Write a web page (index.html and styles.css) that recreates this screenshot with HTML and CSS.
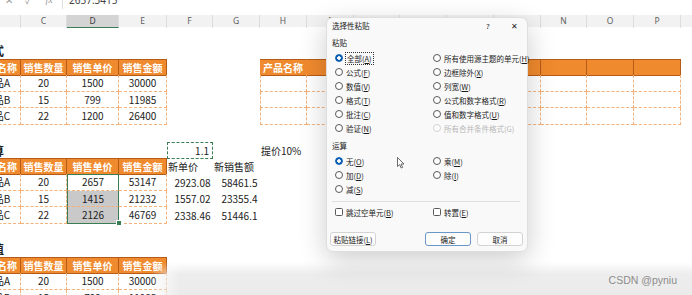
FILE: index.html
```html
<!DOCTYPE html>
<html>

<head>
  <meta charset="utf-8">
  <title>选择性粘贴</title>
  <link rel="stylesheet" href="styles.css">
</head>

<body>
  <div class="formula-bar">
    <span class="fb-icon x">✕</span>
    <span class="fb-icon ok">✓</span>
    <span class="fb-icon fx">fx</span>
    <span class="fb-sep"></span>
    <span class="fb-value">2657.3415</span>
  </div>

  <div class="col-heads">
    <div>B</div><div>C</div><div class="active">D</div><div>E</div><div>F</div><div>G</div><div>H</div><div>I</div>
    <div>J</div><div>K</div><div>L</div><div>M</div><div>N</div><div>O</div><div>P</div><div>Q</div>
  </div>

  <div class="sheet">
    <div class="row first"></div>
    <div class="row"><div class="title">式</div></div>
    <div class="row">
      <div class="th">产品名称</div><div class="th">销售数量</div><div class="th">销售单价</div><div class="th">销售金额</div>
      <div></div><div></div>
      <div class="th open">产品名称</div><div class="th"></div><div class="th"></div><div class="th"></div>
      <div class="th"></div><div class="th"></div><div class="th"></div><div class="th"></div><div class="th"></div>
    </div>
    <div class="row">
      <div class="td">产品A</div><div class="td">20</div><div class="td">1500</div><div class="td">30000</div>
      <div></div><div></div>
      <div class="td lb"></div><div class="td"></div><div class="td"></div><div class="td"></div>
      <div class="td"></div><div class="td"></div><div class="td"></div><div class="td"></div><div class="td"></div>
    </div>
    <div class="row">
      <div class="td">产品B</div><div class="td">15</div><div class="td">799</div><div class="td">11985</div>
      <div></div><div></div>
      <div class="td lb"></div><div class="td"></div><div class="td"></div><div class="td"></div>
      <div class="td"></div><div class="td"></div><div class="td"></div><div class="td"></div><div class="td"></div>
    </div>
    <div class="row">
      <div class="td">产品C</div><div class="td">22</div><div class="td">1200</div><div class="td">26400</div>
      <div></div><div></div>
      <div class="td lb"></div><div class="td"></div><div class="td"></div><div class="td"></div>
      <div class="td"></div><div class="td"></div><div class="td"></div><div class="td"></div><div class="td"></div>
    </div>
    <div class="row"></div>

    <div class="row">
      <div class="title">算</div><div></div><div></div><div></div>
      <div class="copy">1.1</div><div></div>
      <div class="lab">提价10%</div>
    </div>
    <div class="row">
      <div class="th">产品名称</div><div class="th">销售数量</div><div class="th sel-cap">销售单价</div><div class="th">销售金额</div>
      <div class="lab">新单价</div><div class="lab">新销售额</div>
    </div>
    <div class="row">
      <div class="td">产品A</div><div class="td">20</div><div class="td sel">2657</div><div class="td">53147</div>
      <div class="num">2923.08</div><div class="num">58461.5</div>
    </div>
    <div class="row">
      <div class="td">产品B</div><div class="td">15</div><div class="td sel shade">1415</div><div class="td">21232</div>
      <div class="num">1557.02</div><div class="num">23355.4</div>
    </div>
    <div class="row">
      <div class="td">产品C</div><div class="td">22</div><div class="td sel shade sel-end">2126</div><div class="td">46769</div>
      <div class="num">2338.46</div><div class="num">51446.1</div>
    </div>
    <div class="row"></div>

    <div class="row"><div class="title">值</div></div>
    <div class="row">
      <div class="th">产品名称</div><div class="th">销售数量</div><div class="th">销售单价</div><div class="th">销售金额</div>
    </div>
    <div class="row">
      <div class="td">产品A</div><div class="td">20</div><div class="td">1500</div><div class="td">30000</div>
    </div>
    <div class="row">
      <div class="td">产品B</div><div class="td">15</div><div class="td">799</div><div class="td">11985</div>
    </div>
  </div>

  <div class="fade"></div>

  <div class="dialog">
    <div class="dlg-title">
      <span class="dlg-name">选择性粘贴</span>
      <span class="dlg-help">?</span>
      <span class="dlg-close">✕</span>
    </div>

    <div class="dlg-section">粘贴</div>
    <div class="opt-grid">
      <div class="opt"><i class="radio on"></i><span class="focus">全部(<u>A</u>)</span></div>
      <div class="opt"><i class="radio"></i>所有使用源主题的单元(<u>H</u>)</div>
      <div class="opt"><i class="radio"></i>公式(<u>F</u>)</div>
      <div class="opt"><i class="radio"></i>边框除外(<u>X</u>)</div>
      <div class="opt"><i class="radio"></i>数值(<u>V</u>)</div>
      <div class="opt"><i class="radio"></i>列宽(<u>W</u>)</div>
      <div class="opt"><i class="radio"></i>格式(<u>T</u>)</div>
      <div class="opt"><i class="radio"></i>公式和数字格式(<u>R</u>)</div>
      <div class="opt"><i class="radio"></i>批注(<u>C</u>)</div>
      <div class="opt"><i class="radio"></i>值和数字格式(<u>U</u>)</div>
      <div class="opt"><i class="radio"></i>验证(<u>N</u>)</div>
      <div class="opt off"><i class="radio"></i>所有合并条件格式(G)</div>
    </div>

    <div class="dlg-section calc">运算</div>
    <div class="opt-grid">
      <div class="opt"><i class="radio on"></i>无(<u>O</u>)</div>
      <div class="opt"><i class="radio"></i>乘(<u>M</u>)</div>
      <div class="opt"><i class="radio"></i>加(<u>D</u>)</div>
      <div class="opt"><i class="radio"></i>除(<u>I</u>)</div>
      <div class="opt"><i class="radio"></i>减(<u>S</u>)</div>
    </div>

    <div class="dlg-line"></div>

    <div class="opt-grid checks">
      <div class="opt"><i class="check"></i>跳过空单元(<u>B</u>)</div>
      <div class="opt"><i class="check"></i>转置(<u>E</u>)</div>
    </div>

    <div class="dlg-buttons">
      <div class="btn link">粘贴链接(<u>L</u>)</div>
      <div class="btn primary">确定</div>
      <div class="btn">取消</div>
    </div>
  </div>

  <svg class="cursor" width="8" height="12" viewBox="0 0 8 12">
    <path d="M0.5 0.5 L0.5 9.5 L2.7 7.6 L4.2 11 L5.6 10.4 L4.1 7.1 L7 7 Z" fill="#fff" stroke="#444" stroke-width="0.8" stroke-linejoin="round"/>
  </svg>

  <div class="watermark">CSDN @pyniu</div>
</body>

</html>
```

FILE: styles.css
```css
:root {
    --cols: 47px 46px 52px 48px 46px 47px 47px 47px 46px 47px 47px 47px 46px 47px 47px 47px;
    --orange: #f08a2e;
    --orange-edge: #b65b17;
    --dash: #f3b27c;
    --green: #3a7d55;
}
* {
    box-sizing: border-box;
}
html, body {
    margin: 0;
}
body {
    position: relative;
    width: 692px;
    height: 295px;
    overflow: hidden;
    background: #fff;
    color: #222;
    font-family: "Noto Sans CJK SC", "Noto Sans", sans-serif;
}

/* formula bar */
.formula-bar {
    height: 15px;
    overflow: hidden;
    display: flex;
    align-items: flex-start;
}
.formula-bar span {
    margin-top: -5px;
    font-size: 10px;
    line-height: 10px;
}
.fb-icon {
    color: #9a9a9a;
    text-align: center;
}
.fb-icon.x { width: 18px; }
.fb-icon.ok { width: 21px; }
.fb-icon.fx {
    width: 20px;
    font-family: "Liberation Serif", serif;
    font-style: italic;
}
.formula-bar .fb-sep {
    width: 1px;
    height: 14px;
    margin-left: 3px;
    background: #dcdcdc;
}
.fb-value {
    margin-left: 6px;
    color: #444;
    font-family: "Noto Sans", sans-serif;
}

/* column letters */
.col-heads {
    display: grid;
    grid-template-columns: var(--cols);
    margin-left: -26px;
    height: 12px;
    background: #f2f2f2;
}
.col-heads div {
    font-family: "Noto Sans", sans-serif;
    font-size: 8.5px;
    line-height: 12px;
    text-align: center;
    color: #5e5e5e;
    border-right: 1px solid #dddddd;
}
.col-heads .active {
    background: #d4d4d4;
    color: #3a3a3a;
    border-bottom: 1.5px solid var(--green);
}

/* sheet */
.sheet {
    margin-left: -26px;
}
.row {
    display: grid;
    grid-template-columns: var(--cols);
    height: 16.5px;
}
.row.first {
    height: 15px;
}
.row > div {
    display: flex;
    align-items: center;
    justify-content: center;
    font-size: 10px;
    white-space: nowrap;
    overflow: visible;
}
.row > .title {
    justify-content: flex-start;
    padding-left: 18px;
    font-size: 12px;
    font-weight: bold;
}
.th {
    background: var(--orange);
    color: #fff;
    font-weight: bold;
    border-top: 1px solid var(--orange-edge);
    border-bottom: 1px solid var(--orange-edge);
    border-right: 1px solid var(--orange-edge);
}
.th.open {
    border-right-color: var(--orange);
}
.td {
    border-right: 1px dashed var(--dash);
    border-bottom: 1px dashed var(--dash);
}
.td.lb {
    border-left: 1px dashed var(--dash);
}
.row > .lab {
    justify-content: flex-start;
    padding-left: 1px;
}
.row > .num {
    justify-content: flex-end;
    padding-right: 2.5px;
}
.row > .copy {
    justify-content: flex-end;
    padding-right: 3px;
    margin: 1px 0;
    border: 1px dashed var(--green);
}
.th.sel-cap {
    border-bottom: 1.5px solid var(--green);
}
.td.sel {
    position: relative;
    border-left: 1.5px solid var(--green);
    border-right: 1.5px solid var(--green);
}
.td.shade {
    background: #c9c9c9;
}
.td.sel-end {
    border-bottom: 1.5px solid var(--green);
}
.td.sel-end::after {
    content: "";
    position: absolute;
    right: -3.5px;
    bottom: -3.5px;
    width: 4px;
    height: 4px;
    background: var(--green);
    border: 1px solid #fff;
}

.fade {
    position: absolute;
    left: 150px;
    right: 0;
    top: 262px;
    bottom: 0;
    background: linear-gradient(rgba(236, 236, 236, 0), #ededed 12px, #ebebeb);
    -webkit-mask-image: linear-gradient(90deg, transparent, #000 30px);
    mask-image: linear-gradient(90deg, transparent, #000 30px);
}

/* dialog */
.dialog {
    position: absolute;
    left: 326px;
    top: 17px;
    width: 202px;
    height: 235px;
    padding: 0 4px 0 5px;
    display: flex;
    flex-direction: column;
    background: #f9f9f9;
    border: 1px solid #dedede;
    border-radius: 7px;
    box-shadow: 0 8px 28px rgba(0, 0, 0, .2);
    font-size: 7.5px;
    color: #1b1b1b;
}
.dlg-title {
    height: 15px;
    display: flex;
    align-items: center;
}
.dlg-name {
    flex: 1;
}
.dlg-help {
    width: 10px;
    margin-right: 12px;
    text-align: center;
    font-family: "Noto Sans", sans-serif;
}
.dlg-close {
    width: 18px;
    text-align: center;
    font-size: 8px;
}
.dlg-section {
    height: 14px;
    margin-top: 2px;
    display: flex;
    align-items: center;
}
.dlg-section.calc {
    margin-top: 3px;
}
.opt-grid {
    display: grid;
    grid-template-columns: 98px 1fr;
    grid-auto-rows: 14px;
    margin-top: 2px;
    padding-left: 3px;
}
.opt {
    display: flex;
    align-items: center;
    white-space: nowrap;
}
.opt u {
    text-decoration-thickness: 0.5px;
    text-underline-offset: 1px;
}
.radio {
    flex: none;
    width: 8px;
    height: 8px;
    margin-right: 3px;
    border: 1px solid #5a5a5a;
    border-radius: 50%;
    background: #fff;
}
.radio.on {
    border-color: #0a5fb4;
    background: radial-gradient(circle, #fff 0 1.5px, #0a5fb4 2px);
}
.opt.off {
    color: #b8b8b8;
}
.opt.off .radio {
    border-color: #d2d2d2;
}
.focus {
    outline: 1px dotted #333;
    padding: 0 1px;
}
.dlg-line {
    height: 1px;
    margin: 5px 3px 0 0;
    background: #e0e0e0;
}
.opt-grid.checks {
    margin-top: 3px;
}
.check {
    flex: none;
    width: 8px;
    height: 8px;
    margin-right: 3px;
    border: 1px solid #5a5a5a;
    border-radius: 1.5px;
    background: #fff;
}
.dlg-buttons {
    display: flex;
    gap: 6px;
    margin-top: 13px;
}
.btn {
    width: 46px;
    height: 14px;
    display: flex;
    align-items: center;
    justify-content: center;
    background: #fdfdfd;
    border: 1px solid #d3d3d3;
    border-radius: 3px;
}
.btn.link {
    margin-left: -2px;
}
.btn.primary {
    margin-left: auto;
    border-color: #6a96c8;
}

.cursor {
    position: absolute;
    left: 397px;
    top: 157px;
}

.watermark {
    position: absolute;
    right: 15px;
    bottom: 9px;
    font-family: "Liberation Sans", sans-serif;
    font-size: 10.5px;
    color: #8d8d8d;
}
```
